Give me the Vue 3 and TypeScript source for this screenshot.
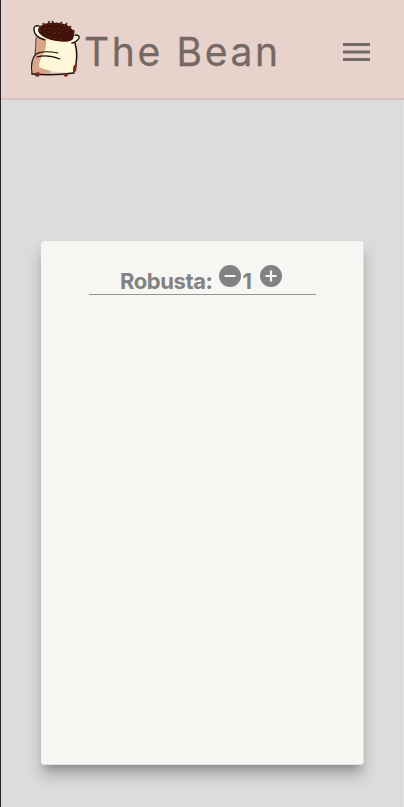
<script setup lang="ts">
import { ref } from 'vue'

const quantity = ref<number>(1)
const beans: number[][] = [
  [21, 13], [25, 11], [29, 10], [33, 11], [37, 10], [41, 11], [45, 12], [49, 14], [53, 18],
  [20, 17], [25, 15], [30, 14], [34, 15], [38, 14], [42, 16], [47, 17], [25, 20], [30, 18],
  [34, 19], [39, 19], [44, 21], [50, 22], [30, 23], [35, 24], [41, 25], [47, 26],
]

function change(step: number): void {
  quantity.value = Math.max(0, quantity.value + step)
}
</script>

<template>
  <div class="page">
    <header class="bar">
      <svg class="logo" viewBox="0 0 70 70" aria-hidden="true">
        <path d="M16 22 Q17 33 15 40 Q10 47 12 60 L30 61 L34 26Z" fill="#dba58a" />
        <path d="M26 25 L54 27 Q59 42 54 58 Q34 60 19 53 Q19 47 23 40 Q27 34 26 25Z" fill="#fff7d7" />
        <path d="M21 12 Q14 10 14 15 Q14 21 20 24 Q26 28 36 30 L54 30 Q62 26 58 22 L52 20Z" fill="#fff7d7" />
        <path d="M18 15 Q22 9 30 9 Q43 8 50 13 Q56 18 53 25 Q50 29 36 27 Q24 25 19 19Z" fill="#401209" />
        <path d="M24 11 l-1 -2 M29 10 l0 -3 M34 10 l-2 -3 M40 10 l2 -2 M45 12 l2 -3 M49 14 l2 -2 M52 18 l2 -2" fill="none" stroke="#4c1b13" stroke-width="1.6" />
        <ellipse v-for="(bean, index) in beans" :key="index" :cx="bean[0]" :cy="bean[1]" rx="1.5" ry="1.1" fill="#73291a" stroke="#35100a" stroke-width=".7" />
        <g fill="none" stroke="#15110e" stroke-linecap="round" stroke-linejoin="round">
          <path d="M19 12 Q14 11 14 15 Q14 21 20 24 L25 26 M55 21 Q60 21 59 24 Q57 28 52 29" stroke-width="1.4" />
          <path d="M16 24 Q16 34 15 40" stroke-width=".8" />
          <path d="M55 29 Q59 43 54 58" stroke-width="1.5" />
          <path d="M12 60 Q10 46 16 40 Q23 36 38 39 M17 43 Q27 40 40 45" stroke-width="1.1" />
          <path d="M12 60 Q33 62 54 59" stroke-width="1.4" />
        </g>
        <path d="M15 59 l4 -1 1 3 -2 2 -3 -1Z M43 60 l5 -1 0 3 -3 1Z M53 54 l1 -3 3 0 -1 6 -3 3Z" fill="#74301f" />
      </svg>
      <h1 class="brand">The Bean</h1>
      <button class="menu" aria-label="Menu">
        <svg viewBox="0 0 27 18"><path d="M0 0h27v3H0zM0 7.5h27v3H0zM0 15h27v3H0z" /></svg>
      </button>
    </header>
    <main class="content">
      <section class="card">
        <div class="row">
          <span class="name">Robusta:</span>
          <button class="step" aria-label="Remove one" @click="change(-1)">
            <svg viewBox="2 2 20 20"><path d="M12 2a10 10 0 1 0 0 20 10 10 0 0 0 0-20zm5 11H7v-2h10v2z" /></svg>
          </button>
          <span class="count">{{ quantity }}</span>
          <button class="step" aria-label="Add one" @click="change(1)">
            <svg viewBox="2 2 20 20"><path d="M12 2a10 10 0 1 0 0 20 10 10 0 0 0 0-20zm5 11h-4v4h-2v-4H7v-2h4V7h2v4h4v2z" /></svg>
          </button>
        </div>
      </section>
    </main>
  </div>
</template>

<style>
body {
  background: #dcdcde;
}
</style>

<style scoped>
.page {
  box-sizing: border-box;
  height: 807px;
  display: flex;
  flex-direction: column;
  border-left: 1px solid #242328;
  border-right: 1px solid #e3e2e3;
  background: #dcdcde;
  font-family: Inter, "Liberation Sans", sans-serif;
}
.bar {
  box-sizing: border-box;
  height: 100px;
  flex: none;
  display: flex;
  align-items: center;
  padding: 0 34px 0 19px;
  margin-right: -1px;
  background: #e7d3cc;
  border-bottom: 2px solid #d5c4bf;
}
.logo {
  width: 70px;
  height: 70px;
  flex: none;
}
.brand {
  margin: 5px auto 0 -6px;
  color: #756965;
  font-size: 39px;
  font-weight: 400;
  line-height: 48px;
  letter-spacing: 2.65px;
  white-space: nowrap;
  -webkit-text-stroke: 0.3px #756965;
}
button {
  padding: 0;
  border: 0;
  background: none;
}
svg {
  display: block;
}
.menu {
  width: 27px;
  height: 18px;
  margin-top: 5px;
  fill: #756965;
}
.content {
  flex: 1;
  padding: 141px 39px 42px 40px;
  display: flex;
}
.card {
  box-sizing: border-box;
  flex: 1;
  padding: 18px 48px 17px;
  border-radius: 4px;
  background: #f7f6f2;
  box-shadow: inset -1px -1px 0 #e0e0de, 0 11px 15px rgba(0, 0, 0, 0.22), 0 7px 8px -5px rgba(0, 0, 0, 0.24);
}
.row {
  box-sizing: border-box;
  height: 36px;
  display: flex;
  justify-content: center;
  padding-right: 3px;
  border-bottom: 1px solid #969692;
  color: #828282;
  font-size: 22px;
  font-weight: 700;
  line-height: 27px;
}
.name,
.count {
  padding-top: 9px;
}
.name {
  letter-spacing: -0.4px;
}
.step {
  width: 22px;
  height: 22px;
  margin-top: 6px;
  margin-left: 6.5px;
  fill: #828282;
}
.count {
  margin-left: 1.5px;
}
.count + .step {
  margin-left: 8px;
}
</style>
